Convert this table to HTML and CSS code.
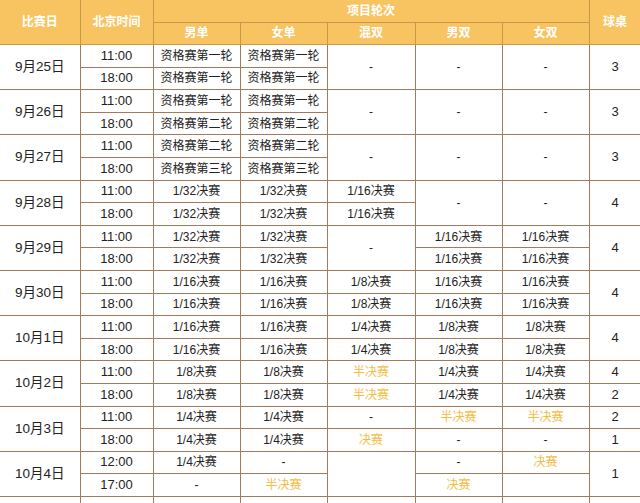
FILE: index.html
```html
<!DOCTYPE html>
<html lang="zh">
<head>
<meta charset="utf-8">
<link rel="stylesheet" href="styles.css">
</head>
<body>
<table class="sched">
<colgroup>
<col class="c-date"><col class="c-time"><col class="c-ev"><col class="c-ev"><col class="c-ev2"><col class="c-ev"><col class="c-ev"><col class="c-tab">
</colgroup>
<thead>
<tr><th rowspan="2">比赛日</th><th rowspan="2">北京时间</th><th colspan="5">项目轮次</th><th rowspan="2">球桌</th></tr>
<tr><th>男单</th><th>女单</th><th>混双</th><th>男双</th><th>女双</th></tr>
</thead>
<tbody>
<tr><td rowspan="2" class="date">9月25日</td><td class="time">11:00</td><td>资格赛第一轮</td><td>资格赛第一轮</td><td rowspan="2">-</td><td rowspan="2">-</td><td rowspan="2">-</td><td rowspan="2" class="num">3</td></tr>
<tr><td class="time">18:00</td><td>资格赛第一轮</td><td>资格赛第一轮</td></tr>

<tr><td rowspan="2" class="date">9月26日</td><td class="time">11:00</td><td>资格赛第一轮</td><td>资格赛第一轮</td><td rowspan="2">-</td><td rowspan="2">-</td><td rowspan="2">-</td><td rowspan="2" class="num">3</td></tr>
<tr><td class="time">18:00</td><td>资格赛第二轮</td><td>资格赛第二轮</td></tr>

<tr><td rowspan="2" class="date">9月27日</td><td class="time">11:00</td><td>资格赛第二轮</td><td>资格赛第二轮</td><td rowspan="2">-</td><td rowspan="2">-</td><td rowspan="2">-</td><td rowspan="2" class="num">3</td></tr>
<tr><td class="time">18:00</td><td>资格赛第三轮</td><td>资格赛第三轮</td></tr>

<tr><td rowspan="2" class="date">9月28日</td><td class="time">11:00</td><td>1/32决赛</td><td>1/32决赛</td><td>1/16决赛</td><td rowspan="2">-</td><td rowspan="2">-</td><td rowspan="2" class="num">4</td></tr>
<tr><td class="time">18:00</td><td>1/32决赛</td><td>1/32决赛</td><td>1/16决赛</td></tr>

<tr><td rowspan="2" class="date">9月29日</td><td class="time">11:00</td><td>1/32决赛</td><td>1/32决赛</td><td rowspan="2">-</td><td>1/16决赛</td><td>1/16决赛</td><td rowspan="2" class="num">4</td></tr>
<tr><td class="time">18:00</td><td>1/32决赛</td><td>1/32决赛</td><td>1/16决赛</td><td>1/16决赛</td></tr>

<tr><td rowspan="2" class="date">9月30日</td><td class="time">11:00</td><td>1/16决赛</td><td>1/16决赛</td><td>1/8决赛</td><td>1/16决赛</td><td>1/16决赛</td><td rowspan="2" class="num">4</td></tr>
<tr><td class="time">18:00</td><td>1/16决赛</td><td>1/16决赛</td><td>1/8决赛</td><td>1/16决赛</td><td>1/16决赛</td></tr>

<tr><td rowspan="2" class="date">10月1日</td><td class="time">11:00</td><td>1/16决赛</td><td>1/16决赛</td><td>1/4决赛</td><td>1/8决赛</td><td>1/8决赛</td><td rowspan="2" class="num">4</td></tr>
<tr><td class="time">18:00</td><td>1/16决赛</td><td>1/16决赛</td><td>1/4决赛</td><td>1/8决赛</td><td>1/8决赛</td></tr>

<tr><td rowspan="2" class="date">10月2日</td><td class="time">11:00</td><td>1/8决赛</td><td>1/8决赛</td><td class="gold">半决赛</td><td>1/4决赛</td><td>1/4决赛</td><td class="num">4</td></tr>
<tr><td class="time">18:00</td><td>1/8决赛</td><td>1/8决赛</td><td class="gold">半决赛</td><td>1/4决赛</td><td>1/4决赛</td><td class="num">2</td></tr>

<tr><td rowspan="2" class="date">10月3日</td><td class="time">11:00</td><td>1/4决赛</td><td>1/4决赛</td><td>-</td><td class="gold">半决赛</td><td class="gold">半决赛</td><td class="num">2</td></tr>
<tr><td class="time">18:00</td><td>1/4决赛</td><td>1/4决赛</td><td class="gold">决赛</td><td>-</td><td>-</td><td class="num">1</td></tr>

<tr><td rowspan="2" class="date">10月4日</td><td class="time">12:00</td><td>1/4决赛</td><td>-</td><td rowspan="2"></td><td>-</td><td class="gold">决赛</td><td rowspan="2" class="num">1</td></tr>
<tr><td class="time">17:00</td><td>-</td><td class="gold">半决赛</td><td class="gold">决赛</td><td></td></tr>

<tr class="tail"><td></td><td></td><td></td><td></td><td></td><td></td><td></td><td></td></tr>
</tbody>
</table>
</body>
</html>
```

FILE: styles.css
```css
html, body {
  margin: 0;
  padding: 0;
  background: #ffffff;
  overflow: hidden;
}

.sched {
  border-collapse: collapse;
  table-layout: fixed;
  width: 641px;
  font-family: "Liberation Sans", "Noto Sans CJK SC", sans-serif;
  color: #222222;
}

.c-date { width: 80px; }
.c-time { width: 73px; }
.c-ev { width: 87px; }
.c-ev2 { width: 88px; }
.c-tab { width: 52px; }

.sched th {
  background: #f8c462;
  color: #ffffff;
  font-weight: bold;
  font-size: 12px;
  line-height: 14px;
  height: 21.5px;
  padding: 0;
  border: 1px solid #c9974a;
  text-align: center;
  vertical-align: middle;
}

.sched thead tr:first-child th {
  border-top: none;
}

.sched td {
  height: 21.6px;
  padding: 0;
  border: 1px solid #a47a5e;
  text-align: center;
  vertical-align: middle;
  font-size: 12px;
  line-height: 14px;
  white-space: nowrap;
}

.sched tr > :first-child {
  border-left: none;
}

.sched .time,
.sched .date,
.sched .num {
  font-size: 13px;
}

.sched .date {
  font-size: 13.5px;
}

.sched .gold {
  color: #f2bd45;
}

.sched .tail td {
  height: 10px;
}
```
